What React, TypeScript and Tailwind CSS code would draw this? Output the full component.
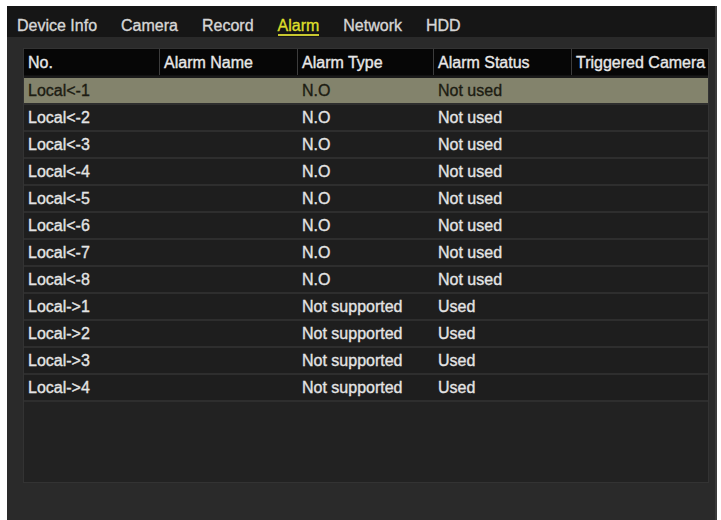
import React from "react";

const rows: [string, string, string][] = [
  ["Local<-1", "N.O", "Not used"],
  ["Local<-2", "N.O", "Not used"],
  ["Local<-3", "N.O", "Not used"],
  ["Local<-4", "N.O", "Not used"],
  ["Local<-5", "N.O", "Not used"],
  ["Local<-6", "N.O", "Not used"],
  ["Local<-7", "N.O", "Not used"],
  ["Local<-8", "N.O", "Not used"],
  ["Local->1", "Not supported", "Used"],
  ["Local->2", "Not supported", "Used"],
  ["Local->3", "Not supported", "Used"],
  ["Local->4", "Not supported", "Used"],
];

const tabs = ["Device Info", "Camera", "Record", "Alarm", "Network", "HDD"];

export default function App() {
  return (
    <div
      className="w-[721px] h-[520px] bg-white pt-[6px] pl-[7px] pr-[4px] overflow-hidden [-webkit-text-stroke:0.35px_currentcolor]"
      style={{ fontFamily: '"Liberation Sans", Arial, sans-serif' }}
    >
      <div className="h-full bg-[#2a2a2a] flex flex-col border-r-2 border-[#3a3a3a]">
        <div className="h-[31px] bg-[#161616] flex items-start pt-[11px] pl-[10px] gap-[24px] text-[16px] text-[#d6d6d6]">
          {tabs.map((t) => (
            <span
              key={t}
              className={
                t === "Alarm"
                  ? "text-[#dede2a] border-b-2 border-[#c8c830] leading-[17px]"
                  : "leading-[17px]"
              }
            >
              {t}
            </span>
          ))}
        </div>
        <div className="pl-[16px] pr-[6px] pt-[11px]">
          <div className="h-[435px] bg-[#222222] border border-[#333] flex flex-col">
            <div className="grid grid-cols-[135px_138px_136px_138px_1fr] h-[27px] bg-[#060606] text-[16px] text-[#e8e8e8] border-b border-[#111]">
              {["No.", "Alarm Name", "Alarm Type", "Alarm Status", "Triggered Camera"].map(
                (h, i) => (
                  <div
                    key={h}
                    className={
                      "flex items-center pt-[1px] pl-[4px] whitespace-nowrap overflow-hidden " +
                      (i > 0 ? "border-l border-[#3c3c3c]" : "")
                    }
                  >
                    {h}
                  </div>
                )
              )}
            </div>
            {rows.map((r, idx) => (
              <div
                key={r[0]}
                className={
                  "grid grid-cols-[135px_138px_136px_138px_1fr] h-[27px] text-[16px] border-t-2 " +
                  (idx === 0
                    ? "bg-[#83836c] text-[#1c1c12] border-[#1a1a1a]"
                    : "bg-[#1e1e1e] text-[#e4e4e4] border-[#2e2e2e]")
                }
              >
                <div className="flex items-center pl-[4px]">{r[0]}</div>
                <div />
                <div className="flex items-center pl-[5px]">{r[1]}</div>
                <div className="flex items-center pl-[5px]">{r[2]}</div>
                <div />
              </div>
            ))}
            <div className="border-t-2 border-[#2e2e2e]" />
          </div>
        </div>
      </div>
    </div>
  );
}
